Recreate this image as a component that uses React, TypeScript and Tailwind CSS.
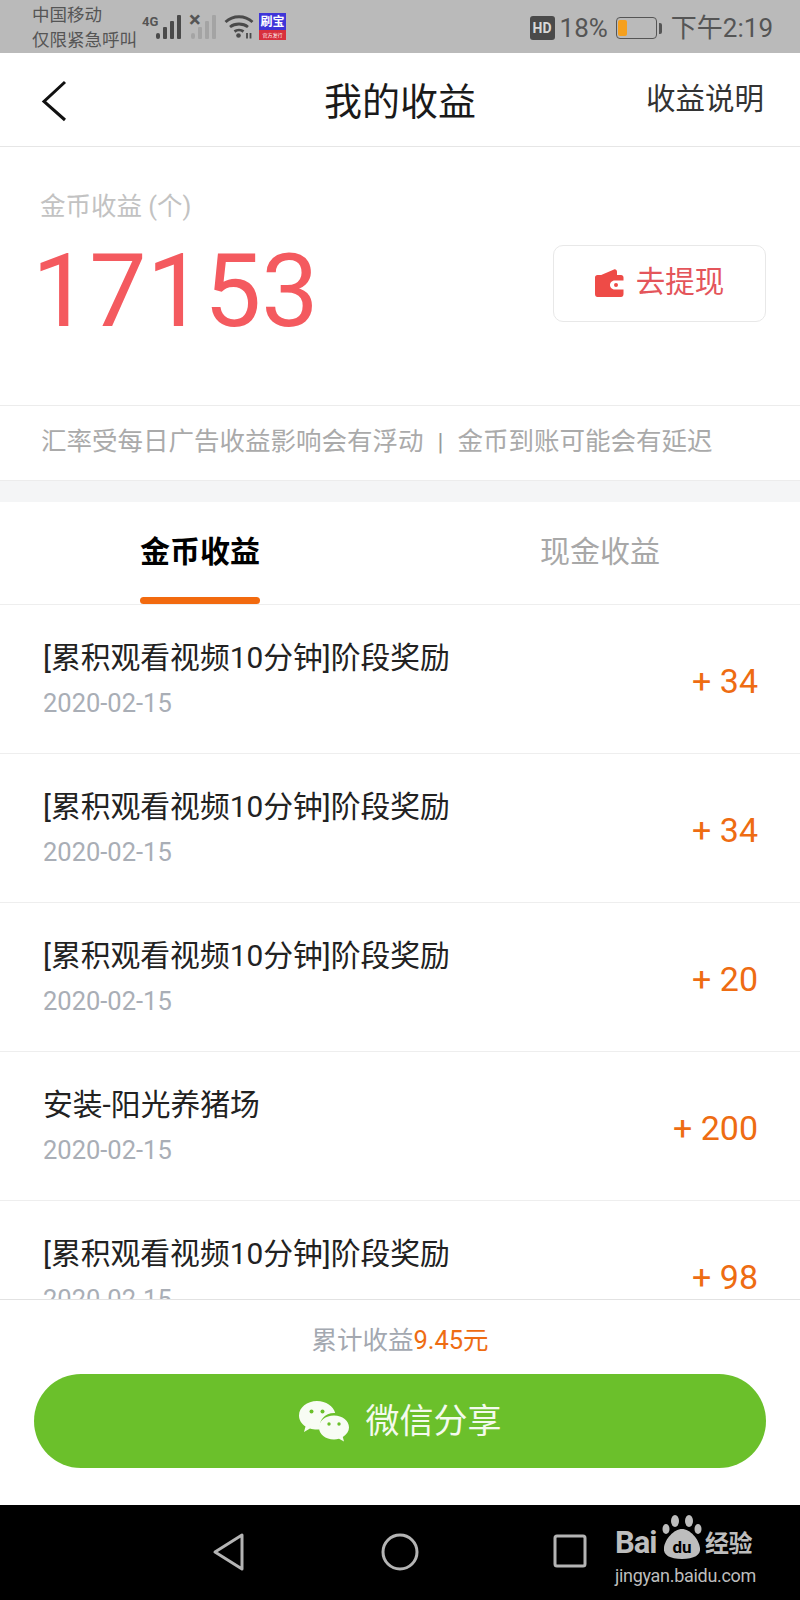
import React from 'react';

const fontStack = 'font-["Roboto","Noto_Sans_CJK_SC",sans-serif]';

interface EarningRow {
  title: string;
  date: string;
  amount: string;
}

const rows: EarningRow[] = [
  { title: '[累积观看视频10分钟]阶段奖励', date: '2020-02-15', amount: '+ 34' },
  { title: '[累积观看视频10分钟]阶段奖励', date: '2020-02-15', amount: '+ 34' },
  { title: '[累积观看视频10分钟]阶段奖励', date: '2020-02-15', amount: '+ 20' },
  { title: '安装-阳光养猪场', date: '2020-02-15', amount: '+ 200' },
  { title: '[累积观看视频10分钟]阶段奖励', date: '2020-02-15', amount: '+ 98' },
];

const SignalBars: React.FC<{ className: string }> = ({ className }) => (
  <svg width="26" height="24" viewBox="0 0 26 24" className={className} fill="currentColor">
    <rect x="0" y="18" width="4" height="6" rx="2" />
    <rect x="7" y="12" width="4" height="12" rx="1" />
    <rect x="14" y="6" width="4" height="18" rx="1" />
    <rect x="21" y="0" width="4" height="24" rx="1" />
  </svg>
);

const StatusBar = () => (
  <div className="flex h-[53px] shrink-0 items-center justify-between bg-[#bababa] pl-[32px] pr-[27px] text-[#4a4a4a]">
    <div className="flex items-center">
      <div className="w-[110px] pt-[3px] text-[17.5px] leading-[25px] text-[#555555]">
        <div>中国移动</div>
        <div>仅限紧急呼叫</div>
      </div>
      <div className="relative h-[30px] w-[40px]">
        <span className="absolute left-[0px] top-[3px] text-[13px] font-bold leading-[14px] text-[#555555]">4G</span>
        <SignalBars className="absolute left-[14px] top-[3px] text-[#4a4a4a]" />
      </div>
      <div className="relative ml-[8px] h-[30px] w-[27px]">
        <SignalBars className="absolute left-[1px] top-[3px] text-[#a4a4a4]" />
        <span className="absolute left-[-1px] top-[-3px] text-[22px] font-bold leading-[22px] text-[#555555]">×</span>
      </div>
      <svg width="30" height="25" viewBox="0 0 30 25" className="ml-[7px] text-[#4a4a4a]" fill="none" stroke="currentColor" strokeWidth="2.800">
        <path d="M1.500 8C9 1 21 1 28.500 8" />
        <path d="M6 13C11 9 19 9 24 13" />
        <path d="M10.500 17.500C13 15.700 17 15.700 19.500 17.500" />
        <circle cx="14.500" cy="21.500" r="2.300" fill="currentColor" stroke="none" />
        <path d="M23 19V24.500M26.500 19V24.500" strokeWidth="1.800" />
      </svg>
      <div className="ml-[5px] flex h-[27px] w-[27px] flex-col overflow-hidden">
        <div className="flex h-[17px] items-center justify-center bg-[#3f35d8] text-[12px] font-bold leading-none text-white">刷宝</div>
        <div className="flex h-[10px] items-center justify-center bg-[#d8303c] text-[5px] leading-none text-white">官方发行</div>
      </div>
    </div>
    <div className="flex items-center pt-[3px] text-[26px] leading-none text-[#555555]">
      <span className="flex h-[24px] w-[25px] items-center justify-center rounded-[3px] bg-[#4a4a4a] text-[14px] font-bold text-[#d8d8d8]">HD</span>
      <span className="ml-[5px]">18%</span>
      <span className="ml-[8px] flex h-[22px] w-[41px] items-center rounded-[4px] border border-[#555555] pl-[1px]">
        <span className="h-[16px] w-[9px] rounded-[2px] bg-[#f5a01e]" />
      </span>
      <span className="ml-[2px] h-[11px] w-[3px] rounded-r-[2px] bg-[#555555]" />
      <span className="ml-[9px]">下午2:19</span>
    </div>
  </div>
);

const Header = () => (
  <div className="relative flex h-[94px] shrink-0 items-center justify-between border-b border-[#e6e6e6] bg-white pl-[41px] pr-[36px]">
    <svg width="26" height="44" viewBox="0 0 26 44" fill="none" stroke="#111111" strokeWidth="3" className="mt-[3px]">
      <path d="M24 3L3 22.500L24 41" />
    </svg>
    <span className="absolute inset-x-0 top-[24px] text-center text-[38px] leading-[50px] text-[#1a1a1a]">我的收益</span>
    <span className="text-[29.5px] leading-none text-[#333333]">收益说明</span>
  </div>
);

const Summary = () => (
  <div className="h-[258px] shrink-0 bg-white pl-[36px] pr-[34px]">
    <div className="pl-[4px] pt-[43px] text-[25.500px] leading-[32px] text-[#c2c2c2]">金币收益 (个)</div>
    <div className="flex items-start justify-between">
      <span className="ml-[-4px] mt-[14px] text-[102px] leading-[110px] text-[#f45a5f]">17153</span>
      <button className="mt-[23px] flex h-[77px] w-[213px] items-center justify-center rounded-[10px] border border-[#e8e8e8] bg-white pb-[2px] text-[29.500px] text-[#e4555b]">
        <svg width="29" height="30" viewBox="0 0 29 30" fill="#ee4b47" className="mr-[12px]">
          <path d="M5 7.500L19 1.500C20.500 1 22 2 22 4V7.500Z" />
          <path d="M2.500 7H26C27.500 7 28.500 8 28.500 9.500V12.500H20C16.500 12.500 15 15 15 17S16.500 21.500 20 21.500H28.500V26C28.500 28 27.500 29 26 29H2.500C1 29 0 28 0 26V9.500C0 8 1 7 2.500 7Z" />
          <circle cx="21" cy="17" r="2" />
        </svg>
        去提现
      </button>
    </div>
  </div>
);

const Notice = () => (
  <div className="flex h-[76px] shrink-0 items-center border-y border-[#ececec] bg-white pb-[2px] pl-[41px] text-[25.500px] leading-none text-[#aaaaaa]">
    汇率受每日广告收益影响会有浮动
    <span className="mx-[14px] text-[24px] text-[#999999]">|</span>
    金币到账可能会有延迟
  </div>
);

const Tabs = () => (
  <div className="mt-[21px] flex h-[103px] shrink-0 border-b border-[#eeeeee] bg-white">
    <div className="relative w-[400px] pt-[30px] text-[30px] leading-[40px]">
      <span className="ml-[140px] font-bold text-black">金币收益</span>
      <span className="absolute bottom-[0px] left-[140px] h-[7px] w-[120px] rounded-full bg-[#f26a0f]" />
    </div>
    <div className="pl-[140px] pt-[30px] text-[30px] leading-[40px] text-[#a8a8a8]">现金收益</div>
  </div>
);

const Row: React.FC<{ row: EarningRow }> = ({ row }) => (
  <div className="flex h-[149px] shrink-0 items-center justify-between border-b border-[#eeeeee] pl-[43px] pr-[42px]">
    <div className="pb-[2px]">
      <div className="text-[29.800px] leading-[42px] text-[#222222]">{row.title}</div>
      <div className="mt-[8px] text-[25.500px] leading-[32px] text-[#a9aeb6]">{row.date}</div>
    </div>
    <span className="mt-[3px] text-[34px] leading-none text-[#ee6c12]">{row.amount}</span>
  </div>
);

const Footer = () => (
  <div className="flex h-[206px] shrink-0 flex-col border-t border-[#e2e2e2] bg-white px-[34px]">
    <div className="pt-[23px] text-center text-[25.500px] leading-[34px] text-[#a3a8b0]">
      累计收益<span className="text-[#ee6c12]">9.45元</span>
    </div>
    <button className="mt-[17px] flex h-[94px] items-center justify-center rounded-full bg-[#6bc02b] text-[34px] text-[#f4faee]">
      <svg width="50" height="42" viewBox="0 0 50 42" fill="#f8fcf4" className="mr-[17px]">
        <path d="M18 1C8 1 0 7.500 0 15.500C0 20 2.500 24 6.500 26.500L5 32L11 28.500C13 29.200 15.500 29.500 18 29.500C19 29.500 20 29.400 21 29.300C19.500 20 26 13 35 13C35.500 13 36 13 36.200 13C34.500 6 27 1 18 1Z" />
        <path d="M35 15.500C26.500 15.500 20 20.700 20 27.500S26.500 39.500 35 39.500C36.700 39.500 38.400 39.300 40 38.700L45 41.500L43.800 37C47.500 34.500 50 31.200 50 27.500C50 20.700 43.500 15.500 35 15.500Z" />
        <circle cx="12.500" cy="11.500" r="2" fill="#6bc02b" />
        <circle cx="23.500" cy="11.500" r="2" fill="#6bc02b" />
        <circle cx="30" cy="24" r="1.700" fill="#6bc02b" />
        <circle cx="40" cy="24" r="1.700" fill="#6bc02b" />
      </svg>
      微信分享
    </button>
  </div>
);

const NavBar = () => (
  <div className="relative flex h-[95px] shrink-0 items-center bg-black pb-[1px]">
    <svg width="34" height="40" viewBox="0 0 34 40" fill="none" stroke="#b4b4b4" strokeWidth="3" strokeLinejoin="round" className="ml-[212px]">
      <path d="M30 3V37L3 20Z" />
    </svg>
    <svg width="38" height="40" viewBox="0 0 38 40" fill="none" stroke="#b4b4b4" strokeWidth="3" className="ml-[135px]">
      <circle cx="19" cy="20" r="17" />
    </svg>
    <svg width="34" height="36" viewBox="0 0 34 36" fill="none" stroke="#b4b4b4" strokeWidth="3" className="ml-[134px]">
      <rect x="2" y="2" width="30" height="30" rx="2" />
    </svg>
    {/* site badge sits over the nav keys */}
    <div className="absolute left-[615px] top-[10px] w-[150px] text-[#bdbdbd]">
      <div className="flex items-end">
        <span className="w-[46px] text-[31px] font-bold leading-[32px] tracking-[-1px]">Bai</span>
        <svg width="44" height="44" viewBox="0 0 44 44" className="ml-[-1px]">
          <g fill="#bdbdbd">
            <ellipse cx="15" cy="6" rx="4" ry="6" />
            <ellipse cx="29" cy="6" rx="4" ry="6" />
            <ellipse cx="6" cy="14" rx="3.500" ry="5" />
            <ellipse cx="38" cy="14" rx="3.500" ry="5" />
            <path d="M22 14C14 14 5 24 4 33C3 40 10 44 22 44S41 40 40 33C39 24 30 14 22 14Z" />
          </g>
          <text x="22" y="38" textAnchor="middle" fontSize="17" fontWeight="700" fill="#000000">du</text>
        </svg>
        <span className="ml-[1px] text-[24px] font-bold leading-[30px] tracking-[-0.5px]">经验</span>
      </div>
      <div className="mt-[7px] text-[18px] leading-[20px] tracking-[-0.3px]">jingyan.baidu.com</div>
    </div>
  </div>
);

export default function App() {
  return (
    <div className={`flex h-[1600px] w-[800px] flex-col overflow-hidden bg-[#f4f5f6] ${fontStack}`}>
      <StatusBar />
      <Header />
      <Summary />
      <Notice />
      <Tabs />
      <div className="flex min-h-0 flex-1 flex-col overflow-hidden bg-white">
        {rows.map((row, i) => (
          <Row key={i} row={row} />
        ))}
      </div>
      <Footer />
      <NavBar />
    </div>
  );
}
